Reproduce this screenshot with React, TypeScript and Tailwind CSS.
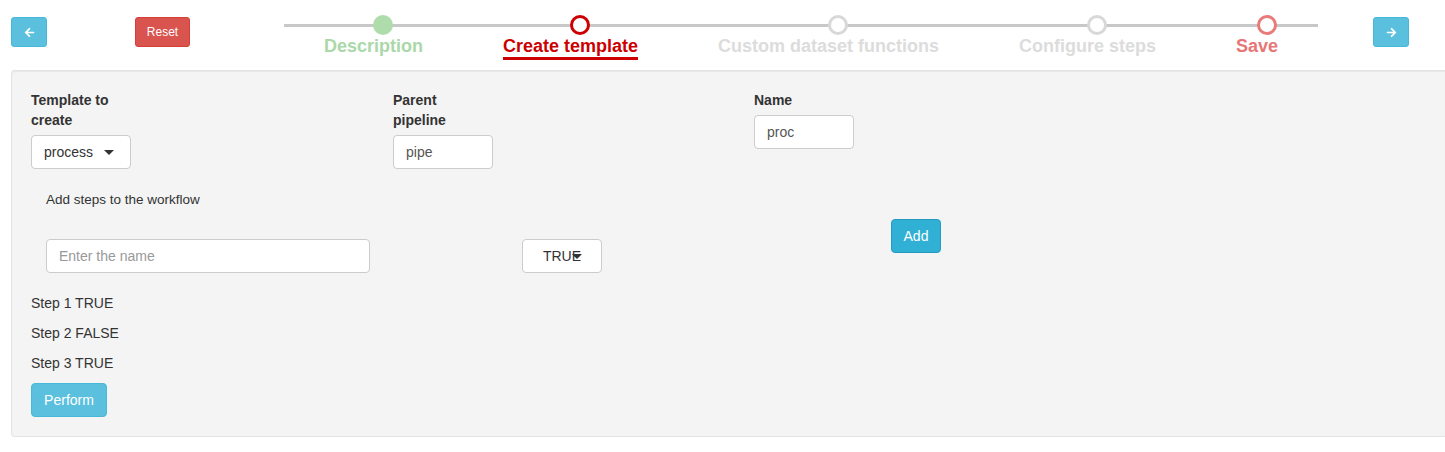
import React from "react";
import { FaArrowLeft, FaArrowRight } from "react-icons/fa";

const steps = [
  { name: "Description", state: "done" },
  { name: "Create template", state: "active" },
  { name: "Custom dataset functions", state: "todo" },
  { name: "Configure steps", state: "todo" },
  { name: "Save", state: "last" },
];

const Step = ({ name, state }) => {
  let circle = "border-[3px] border-[#d8d8d8] bg-white";
  let label = "text-[#dcdcdc]";
  if (state === "done") {
    circle = "bg-[#aedcab]";
    label = "text-[#aad8a8]";
  }
  if (state === "active") {
    circle = "border-[3px] border-[#cc0000] bg-white";
    label = "text-[#cc0000] border-b-[3px] border-[#cc0000] pb-px";
  }
  if (state === "last") {
    circle = "border-[3px] border-[#e87a7a] bg-white";
    label = "text-[#e87676]";
  }
  return (
    <div className="flex flex-col items-center relative z-10">
      <div className={`w-5 h-5 rounded-full relative left-[10px] ${circle}`} />
      <p className={`mt-px text-[18px] leading-[20px] font-bold whitespace-nowrap ${label}`}>{name}</p>
    </div>
  );
};

const Caret = () => (
  <span className="inline-block w-0 h-0 border-l-[5px] border-r-[5px] border-t-[5px] border-l-transparent border-r-transparent border-t-[#333]" />
);

export default function App() {
  return (
    <div className="w-[1445px] h-[452px] overflow-hidden bg-white text-[14px] text-[#333] font-['Liberation_Sans',Arial,sans-serif]">
      {/* header */}
      <div className="flex items-start h-[70px] pl-[11px]">
        <button className="mt-[17px] w-[36px] h-[30px] rounded-[3px] bg-[#5bc0de] border border-[#46b8da] text-white flex items-center justify-center">
          <FaArrowLeft className="text-[11px]" />
        </button>
        <button className="mt-[17px] ml-[88px] w-[55px] h-[30px] rounded-[3px] bg-[#d9534f] border border-[#d43f3a] text-white text-[12px]">
          Reset
        </button>
        <div className="ml-[94px] w-[1034px] h-[70px] pt-[15px] relative">
          <div className="absolute left-0 right-0 top-[24px] h-[3px] bg-[#c8c8c8]" />
          <div className="flex justify-around">
            {steps.map((s) => (
              <Step key={s.name} name={s.name} state={s.state} />
            ))}
          </div>
        </div>
        <button className="mt-[17px] ml-[55px] w-[36px] h-[30px] rounded-[3px] bg-[#5bc0de] border border-[#46b8da] text-white flex items-center justify-center">
          <FaArrowRight className="text-[11px]" />
        </button>
      </div>

      {/* panel */}
      <div className="ml-[11px] h-[367px] bg-[#f4f4f4] border border-r-0 border-[#e3e3e3] rounded-l-[4px] shadow-[inset_0_1px_1px_rgba(0,0,0,0.05)] py-[19px] pl-[19px]">
        <div className="flex items-start">
          <div className="w-[362px]">
            <p className="w-[95px] font-bold leading-[20px] mb-[5px]">Template to create</p>
            <div className="w-[100px] h-[34px] bg-white border border-[#ccc] rounded-[4px] flex items-center pl-[12px] gap-[11px] text-[#333]">
              <span>process</span>
              <Caret />
            </div>
          </div>
          <div className="w-[361px]">
            <p className="w-[95px] font-bold leading-[20px] mb-[5px]">Parent pipeline</p>
            <div className="w-[100px] h-[34px] bg-white border border-[#ccc] rounded-[4px] flex items-center pl-[12px] text-[#555]">
              pipe
            </div>
          </div>
          <div>
            <p className="font-bold leading-[20px] mb-[5px]">Name</p>
            <div className="w-[100px] h-[34px] bg-white border border-[#ccc] rounded-[4px] flex items-center pl-[12px] text-[#555]">
              proc
            </div>
          </div>
        </div>

        <div className="pl-[15px]">
          <p className="mt-[21px] leading-[20px] text-[13.5px]">Add steps to the workflow</p>
          <div className="flex items-start mt-[9px]">
            <div className="mt-[20px] w-[324px] h-[34px] bg-white border border-[#ccc] rounded-[4px] flex items-center pl-[12px] text-[#999]">
              Enter the name
            </div>
            <div className="mt-[20px] ml-[152px] w-[80px] h-[34px] bg-white border border-[#ccc] rounded-[4px] flex items-center justify-center relative text-[#333]">
              <span>TRUE</span>
              <span className="absolute right-[19px] top-[14px] flex">
                <Caret />
              </span>
            </div>
            <button className="ml-[289px] w-[50px] h-[34px] rounded-[4px] bg-[#31b0d5] border border-[#269abc] text-white">
              Add
            </button>
          </div>
        </div>

        <div className="mt-[20px]">
          <p className="leading-[20px] mb-[10px]">Step 1 TRUE</p>
          <p className="leading-[20px] mb-[10px]">Step 2 FALSE</p>
          <p className="leading-[20px] mb-[10px]">Step 3 TRUE</p>
          <button className="w-[76px] h-[34px] rounded-[4px] bg-[#5bc0de] border border-[#46b8da] text-white">
            Perform
          </button>
        </div>
      </div>
    </div>
  );
}
